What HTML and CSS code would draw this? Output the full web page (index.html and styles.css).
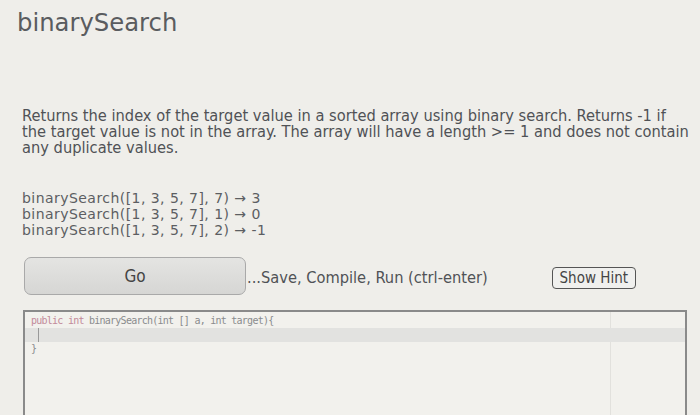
FILE: index.html
```html
<!DOCTYPE html>
<html>
<head>
<meta charset="utf-8">
<link rel="stylesheet" href="styles.css">
</head>
<body>
<div class="page">
  <h1 class="title">binarySearch</h1>
  <p class="desc">Returns the index of the target value in a sorted array using binary search. Returns -1 if the target value is not in the array. The array will have a length &gt;= 1 and does not contain any duplicate values.</p>
  <div class="examples">
    <div>binarySearch([1, 3, 5, 7], 7) → 3</div>
    <div>binarySearch([1, 3, 5, 7], 1) → 0</div>
    <div>binarySearch([1, 3, 5, 7], 2) → -1</div>
  </div>
  <div class="controls">
    <button class="go">Go</button>
    <span class="save">...Save, Compile, Run (ctrl-enter)</span>
    <button class="hint">Show Hint</button>
  </div>
  <div class="editor">
    <div class="margin-line"></div>
    <div class="line"><span class="kw">public int</span> binarySearch(int [] a, int target){</div>
    <div class="line active"><span class="cursor"></span></div>
    <div class="line">}</div>
  </div>
</div>
</body>
</html>
```
FILE: styles.css
```css
html, body {
  margin: 0;
  padding: 0;
  background: #efeeea;
  width: 700px;
  height: 415px;
  overflow: hidden;
}
.page {
  padding: 8px 6px 0 22px;
  font-family: "DejaVu Sans", Verdana, sans-serif;
  color: #55575a;
}
.title {
  margin: 0 0 0 -5px;
  font-weight: normal;
  font-size: 24.3px;
  line-height: 30px;
  color: #5a5c5f;
}
.desc {
  width: 669px;
  margin: 70px 0 0 0;
  font-family: "DejaVu Sans Condensed", "DejaVu Sans", sans-serif;
  font-size: 16.3px;
  line-height: 16px;
  color: #505256;
}
.examples {
  margin-top: 34px;
  font-size: 14px;
  letter-spacing: 0.45px;
  line-height: 16px;
  color: #5c5e62;
}
.controls {
  display: flex;
  align-items: center;
  margin-top: 19px;
  margin-left: 2px;
  height: 37px;
}
.go {
  width: 222px;
  height: 38px;
  border: 1px solid #a9a9a9;
  border-radius: 7px;
  background: linear-gradient(#e4e4e2, #d6d6d4);
  font-family: "DejaVu Sans Condensed", "DejaVu Sans", sans-serif;
  font-size: 17px;
  color: #444;
  padding: 0;
}
.save {
  margin-left: 1px;
  margin-top: 4px;
  font-family: "DejaVu Sans Condensed", "DejaVu Sans", sans-serif;
  font-size: 16.3px;
  color: #505256;
}
.hint {
  margin-left: 64px;
  margin-top: 5px;
  width: 84px;
  height: 22px;
  border: 1.5px solid #555;
  border-radius: 4px;
  background: #f0f0ee;
  font-family: "DejaVu Sans Condensed", "DejaVu Sans", sans-serif;
  font-size: 15px;
  color: #444;
  padding: 0;
}
.editor {
  position: relative;
  margin-top: 16px;
  margin-left: 1px;
  width: 660px;
  height: 120px;
  border: 2px solid #8a8a8a;
  border-bottom: none;
  background: #f2f1ed;
  padding-top: 2px;
  font-family: "DejaVu Sans Mono", monospace;
  font-size: 10px;
  letter-spacing: -0.75px;
  color: #8a8c8e;
}
.margin-line {
  position: absolute;
  top: 0;
  bottom: 0;
  left: 585px;
  width: 1px;
  background: #e2e1dd;
}
.line {
  position: relative;
  height: 14px;
  line-height: 14px;
  padding-left: 6px;
  white-space: pre;
}
.line.active {
  background: #e2e2e0;
}
.kw { color: #c28a9a; }
.cursor {
  display: inline-block;
  width: 1px;
  height: 14px;
  margin-left: 7px;
  vertical-align: top;
  background: #999;
}
```
